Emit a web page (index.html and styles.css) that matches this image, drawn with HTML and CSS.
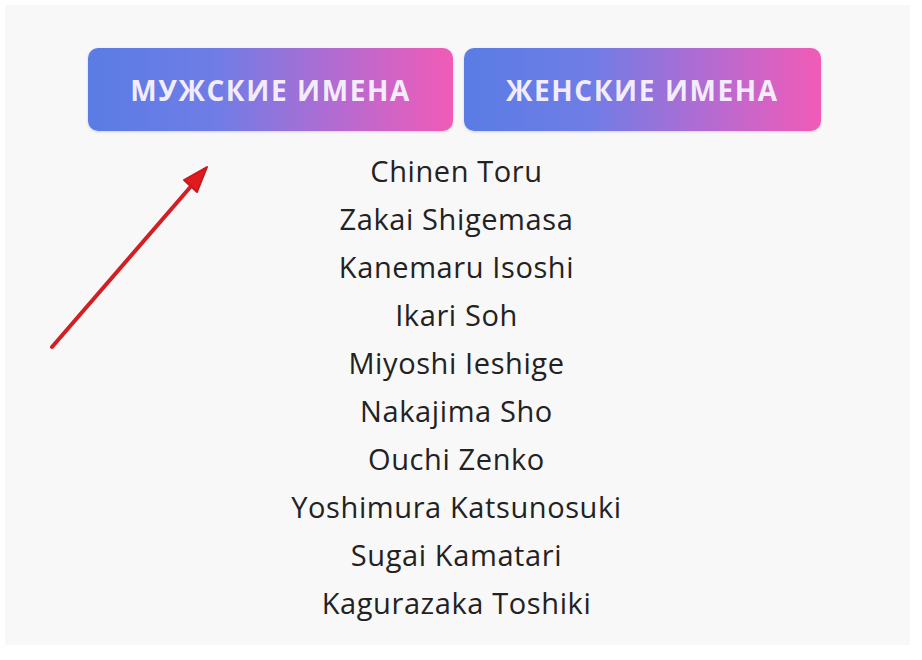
FILE: index.html
```html
<!DOCTYPE html>
<html lang="ru">
<head>
    <meta charset="UTF-8">
    <meta name="viewport" content="width=device-width, initial-scale=1.0">
    <title>Японские имена</title>
    <link rel="stylesheet" href="styles.css">
</head>
<body>
    <div class="page">
        <div class="controls">
            <button class="gender-btn">Мужские имена</button>
            <button class="gender-btn">Женские имена</button>
        </div>
        <ul class="names">
            <li>Chinen Toru</li>
            <li>Zakai Shigemasa</li>
            <li>Kanemaru Isoshi</li>
            <li>Ikari Soh</li>
            <li>Miyoshi Ieshige</li>
            <li>Nakajima Sho</li>
            <li>Ouchi Zenko</li>
            <li>Yoshimura Katsunosuki</li>
            <li>Sugai Kamatari</li>
            <li>Kagurazaka Toshiki</li>
        </ul>
        <svg class="arrow" width="180" height="200" viewBox="0 0 180 200">
            <line x1="7" y1="187" x2="148" y2="24" stroke="#d21f24" stroke-width="4" stroke-linecap="round"/>
            <polygon points="162,7 139,20 152,32" fill="#e01b1f" stroke="#c41a1e" stroke-width="2" stroke-linejoin="round"/>
        </svg>
    </div>
</body>
</html>
```

FILE: styles.css
```css
body {
    margin: 0;
    background: #ffffff;
    font-family: "Open Sans", sans-serif;
}
.page {
    position: relative;
    margin: 5px 12px 15px 5px;
    height: 640px;
    background: #f8f8f8;
    padding-top: 43px;
    box-sizing: border-box;
}
.controls {
    display: flex;
    justify-content: center;
    gap: 11px;
    padding-right: 6px;
}
.gender-btn {
    height: 83px;
    padding: 0 42px;
    border: none;
    border-radius: 10px;
    background: linear-gradient(90deg, #5a7ce4 0%, #6f7de6 35%, #b76ad0 70%, #f25bb7 100%);
    color: #f3ecff;
    font-family: "Open Sans", sans-serif;
    font-weight: 700;
    font-size: 28px;
    letter-spacing: 1.6px;
    text-transform: uppercase;
    box-shadow: 0 1px 3px rgba(0, 0, 0, 0.15);
    cursor: pointer;
}
.names {
    list-style: none;
    margin: 16px 0 0;
    padding: 0 2px 0 0;
    text-align: center;
    color: #222;
    font-size: 29px;
    line-height: 48px;
    letter-spacing: 0.6px;
}
.arrow {
    position: absolute;
    left: 40px;
    top: 155px;
}
```
